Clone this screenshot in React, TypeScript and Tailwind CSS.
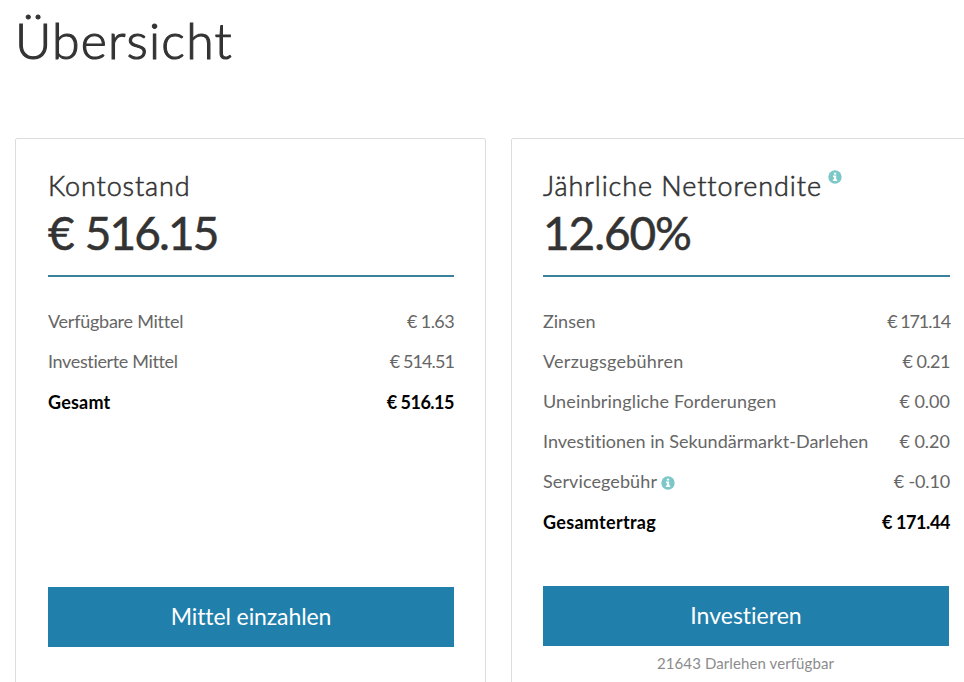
import React from 'react';

function InfoIcon({ className = '' }: { className?: string }) {
  return (
    <svg viewBox="0 0 14 14" className={`size-[14px] shrink-0 ${className}`} aria-hidden="true">
      <circle cx="7" cy="7" r="6.7" fill="#7cc8c9" />
      <path d="M5.9 2.7h2.3v1.8H5.9zM5 5.6h3.2v4h1v1.5H4.9V9.6h1V7H5z" fill="#fff" />
    </svg>
  );
}

type RowProps = { label: string; value: string; track: string; valueTrack: string; info?: boolean; total?: boolean };

function Row({ label, value, track, valueTrack, info, total }: RowProps) {
  return (
    <div
      className={`flex h-10 items-center justify-between whitespace-nowrap text-[18px] ${
        total ? 'pt-0.5 font-bold text-black' : 'font-normal text-[#666]'
      }`}
    >
      <span className="flex items-center">
        <span className={track}>{label}</span>
        {info && <InfoIcon className="ml-1 mt-[3px]" />}
      </span>
      <span className={valueTrack}>{value}</span>
    </div>
  );
}

export default function App() {
  return (
    <div className="h-[682px] w-[964px] overflow-hidden bg-white font-['Lato',sans-serif] text-[#333] [font-variant-ligatures:none]">
      <h1 className="ml-[15px] h-[138px] pt-[10px] text-[50px] font-light leading-[60px] tracking-[1.2px] [-webkit-text-stroke:1.1px_#333]">Übersicht</h1>
      <div className="ml-[15px] flex w-[967px] gap-[25px]">
        <section className="h-[600px] w-[471px] shrink-0 rounded-[2px] border border-[#ddd] pl-8 pr-[31px]">
          <h2 className="mt-[31px] h-8 text-[27px] font-light leading-8 tracking-[0.9px] [-webkit-text-stroke:0.6px_#333]">Kontostand</h2>
          <p className="h-[62px] whitespace-nowrap text-[46px] leading-[62px] tracking-[-1.9px] [-webkit-text-stroke:0.5px_#333] [word-spacing:2px]">€ 516.15</p>
          <div className="mt-[11px] h-[2px] bg-[#3a819c]" />
          <div className="mt-[24px]">
            <Row label="Verfügbare Mittel" value="€ 1.63" track="tracking-[-0.25px]" valueTrack="tracking-[-0.6px]" />
            <Row label="Investierte Mittel" value="€ 514.51" track="tracking-[-0.35px]" valueTrack="tracking-[-0.9px]" />
            <Row label="Gesamt" value="€ 516.15" track="tracking-[0.2px]" valueTrack="tracking-[-0.5px]" total />
          </div>
          <button className="mt-[166px] block h-[60px] w-full bg-[#2180ab] pb-0.5 text-[23px] text-white">
            <span className="tracking-[-0.1px]">Mittel einzahlen</span>
          </button>
        </section>
        <section className="h-[600px] w-[471px] shrink-0 rounded-[2px] border border-[#ddd] px-[31px]">
          <h2 className="mt-[31px] flex h-8 whitespace-nowrap text-[27px] font-light leading-8">
            <span className="tracking-[0.93px] [-webkit-text-stroke:0.6px_#333]">Jährliche Nettorendite</span>
            <InfoIcon className="ml-[6px]" />
          </h2>
          <p className="h-[62px] whitespace-nowrap text-[46px] leading-[62px] tracking-[-1.1px] [-webkit-text-stroke:0.5px_#333]">12.60%</p>
          <div className="mt-[11px] h-[2px] bg-[#3a819c]" />
          <div className="mt-[24px]">
            <Row label="Zinsen" value="€ 171.14" track="" valueTrack="tracking-[-1.1px]" />
            <Row label="Verzugsgebühren" value="€ 0.21" track="tracking-[0.25px]" valueTrack="tracking-[-0.5px]" />
            <Row label="Uneinbringliche Forderungen" value="€ 0.00" track="tracking-[0.15px]" valueTrack="" />
            <Row label="Investitionen in Sekundärmarkt-Darlehen" value="€ 0.20" track="tracking-[0.01px]" valueTrack="" />
            <Row label="Servicegebühr" value="€ -0.10" track="tracking-[0.1px]" valueTrack="tracking-[-0.15px]" info />
            <Row label="Gesamtertrag" value="€ 171.44" track="tracking-[0.3px]" valueTrack="tracking-[-0.4px]" total />
          </div>
          <button className="mt-[45px] block h-[60px] w-[406px] bg-[#2180ab] pb-0.5 text-[23px] text-white">
            <span>Investieren</span>
          </button>
          <p className="mt-[7px] w-[405px] text-center text-[15px] leading-5 tracking-[0.1px] text-[#8c8c8c]">21643 Darlehen verfügbar</p>
        </section>
      </div>
    </div>
  );
}
